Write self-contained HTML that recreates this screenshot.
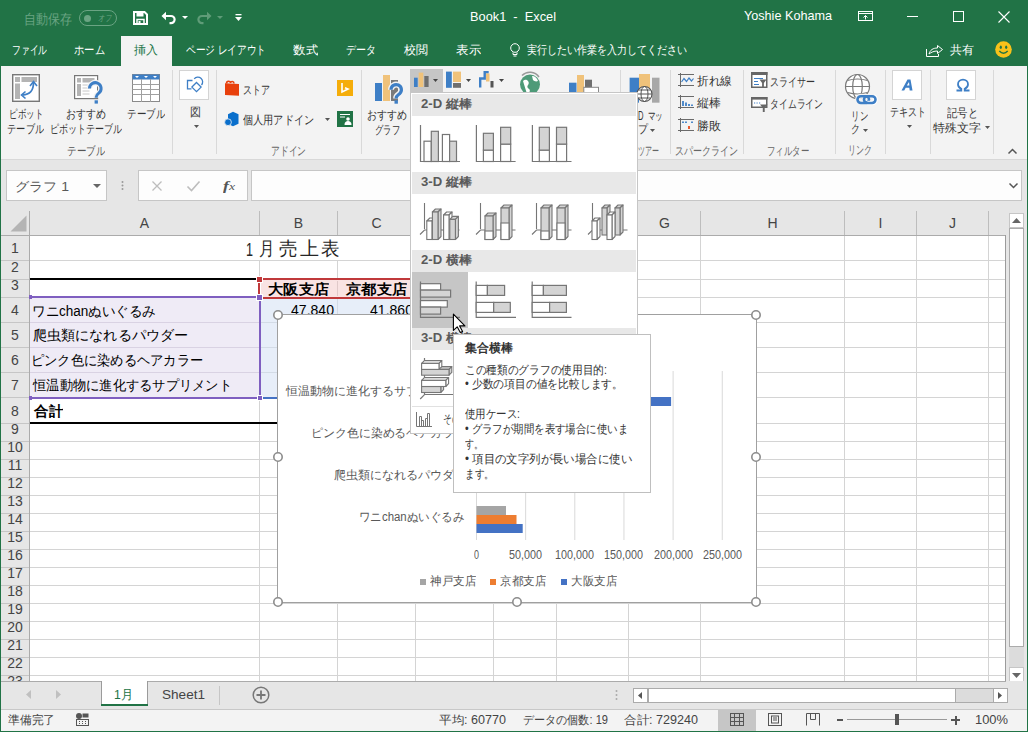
<!DOCTYPE html>
<html><head><meta charset="utf-8">
<style>
*{box-sizing:border-box;margin:0;padding:0}
html,body{width:1028px;height:732px;overflow:hidden;background:#217346;font-family:"Liberation Sans",sans-serif;color:#262626;position:relative}
.a{position:absolute;white-space:nowrap}
.t{transform-origin:0 0}
svg{overflow:visible}
</style></head><body>
<div class="a t" style="transform:scaleX(0.857143);left:24px;top:12px;font-size:14px;line-height:14px;color:#6aa483;--w:48;">自動保存</div>
<div class="a" style="left:79px;top:10px;width:38px;height:16px;border:1px solid #6aa483;border-radius:8px"></div>
<div class="a" style="left:84px;top:15px;width:7px;height:7px;background:#6aa483;border-radius:50%"></div>
<div class="a t" style="transform:scaleX(0.722222);left:98px;top:14px;font-size:9px;line-height:9px;color:#6aa483;--w:13;font-style:italic;">オフ</div>
<svg class="a" style="left:133px;top:11px" width="15" height="14" viewBox="0 0 15 14"><path d="M1 1h10.5l2.5 2.5V13H1z" fill="none" stroke="#fff" stroke-width="2"/><rect x="3.5" y="1" width="7" height="4.5" fill="#fff"/><rect x="4" y="8.5" width="7" height="4.5" fill="none" stroke="#fff" stroke-width="1.5"/><rect x="5.5" y="10" width="2" height="3" fill="#fff"/></svg>
<svg class="a" style="left:161px;top:11px" width="16" height="13" viewBox="0 0 16 13"><path d="M3.5 5h6.5a3.6 3.6 0 0 1 0 7.2h-1.5" fill="none" stroke="#fff" stroke-width="2.2"/><path d="M0.5 5l4.5-4.3v8.6z" fill="#fff"/></svg>
<svg class="a" style="left:182px;top:16px" width="6" height="3" viewBox="0 0 6 3"><path d="M0 0h6l-3 3z" fill="#fff"/></svg>
<svg class="a" style="left:196px;top:11px" width="16" height="13" viewBox="0 0 16 13"><path d="M12.5 5H6a3.6 3.6 0 0 0 0 7.2h1.5" fill="none" stroke="#5f9c78" stroke-width="2.2"/><path d="M15.5 5L11 0.7v8.6z" fill="#5f9c78"/></svg>
<svg class="a" style="left:217px;top:16px" width="6" height="3" viewBox="0 0 6 3"><path d="M0 0h6l-3 3z" fill="#5f9c78"/></svg>
<svg class="a" style="left:235px;top:14px" width="7" height="8" viewBox="0 0 7 8"><rect x="0.5" y="0" width="6" height="1.3" fill="#fff"/><path d="M0 3h7l-3.5 4z" fill="#fff"/></svg>
<div class="a t" style="transform:scaleX(0.98356);left:470px;top:10px;font-size:13px;line-height:13px;color:#fff;--w:86;">Book1&nbsp;&nbsp;-&nbsp;&nbsp;Excel</div>
<div class="a t" style="transform:scaleX(0.971369);left:744px;top:9px;font-size:13px;line-height:13px;color:#fff;--w:88;">Yoshie Kohama</div>
<svg class="a" style="left:858px;top:11px" width="15" height="10" viewBox="0 0 15 10"><rect x="0.5" y="0.5" width="14" height="9" fill="none" stroke="#fff"/><path d="M1 2.5h13" stroke="#fff"/><path d="M7.5 8.5V4.5M5.5 6.5l2-2 2 2" fill="none" stroke="#fff"/></svg>
<div class="a" style="left:907px;top:16px;width:11px;height:1px;background:#fff;"></div>
<div class="a" style="left:953px;top:11px;width:11px;height:11px;border:1px solid #fff"></div>
<svg class="a" style="left:998px;top:11px" width="12" height="12" viewBox="0 0 12 12"><path d="M0.5 0.5l11 11M11.5 0.5l-11 11" stroke="#fff" stroke-width="1.1"/></svg>
<div class="a t" style="transform:scaleX(0.729167);left:12px;top:44px;font-size:12px;line-height:12px;color:#fff;--w:35;">ファイル</div>
<div class="a t" style="transform:scaleX(0.861111);left:74px;top:44px;font-size:12px;line-height:12px;color:#fff;--w:31;">ホーム</div>
<div class="a" style="left:121px;top:36px;width:51px;height:30px;background:#f3f3f3;"></div>
<div class="a t" style="transform:scaleX(1);left:134px;top:44px;font-size:12px;line-height:12px;color:#217346;--w:24;">挿入</div>
<div class="a t" style="transform:scaleX(0.805285);left:186px;top:44px;font-size:12px;line-height:12px;color:#fff;--w:80;">ページ レイアウト</div>
<div class="a t" style="transform:scaleX(1.04167);left:293px;top:44px;font-size:12px;line-height:12px;color:#fff;--w:25;">数式</div>
<div class="a t" style="transform:scaleX(0.833333);left:346px;top:44px;font-size:12px;line-height:12px;color:#fff;--w:30;">データ</div>
<div class="a t" style="transform:scaleX(1);left:404px;top:44px;font-size:12px;line-height:12px;color:#fff;--w:24;">校閲</div>
<div class="a t" style="transform:scaleX(1.04167);left:456px;top:44px;font-size:12px;line-height:12px;color:#fff;--w:25;">表示</div>
<svg class="a" style="left:510px;top:43px" width="10" height="14" viewBox="0 0 10 14"><circle cx="5" cy="5" r="4.3" fill="none" stroke="#fff"/><path d="M3 9.5v2h4v-2M3.5 13h3" fill="none" stroke="#fff"/></svg>
<div class="a t" style="transform:scaleX(0.833333);left:527px;top:44px;font-size:12px;line-height:12px;color:#fff;--w:160;">実行したい作業を入力してください</div>
<svg class="a" style="left:926px;top:44px" width="17" height="13" viewBox="0 0 17 13"><path d="M0.5 5v7.5h12V10" fill="none" stroke="#fff"/><path d="M3 10c1-4 4-6 8.5-6V1.5l5 4-5 4V7C8 7 5.5 8 3 10z" fill="none" stroke="#fff"/></svg>
<div class="a t" style="transform:scaleX(1);left:950px;top:44px;font-size:12px;line-height:12px;color:#fff;--w:24;">共有</div>
<svg class="a" style="left:995px;top:41px" width="17" height="17" viewBox="0 0 17 17"><circle cx="8.5" cy="8.5" r="8.3" fill="#f8c21a"/><ellipse cx="5.8" cy="6.2" rx="1.1" ry="1.7" fill="#217346"/><ellipse cx="11.2" cy="6.2" rx="1.1" ry="1.7" fill="#217346"/><path d="M4.3 10q4.2 4.5 8.4 0" fill="none" stroke="#217346" stroke-width="1.4"/></svg>
<div class="a" style="left:1px;top:66px;width:1026px;height:93px;background:#f3f3f3;"></div>
<div class="a" style="left:1px;top:159px;width:1026px;height:1px;background:#d8d8d8;"></div>
<svg class="a" style="left:12px;top:74px" width="28" height="28" viewBox="0 0 28 28"><rect x="0.7" y="0.7" width="26.6" height="26.6" fill="#fff" stroke="#777" stroke-width="1.4"/><rect x="3" y="3" width="5" height="5" fill="#b4b4b4"/><rect x="9.5" y="3" width="15.5" height="5" fill="#b4b4b4"/><rect x="3" y="9.5" width="5" height="15.5" fill="#b4b4b4"/><path d="M21.5 8.5C21.5 16 19 20.5 10.5 21" fill="none" stroke="#3e7fc6" stroke-width="1.8"/><path d="M18 12l3.5-4.5 3.5 4.5M13.5 17.5l-4 3.5 4 3.5" fill="none" stroke="#3e7fc6" stroke-width="1.6"/></svg>
<div class="a t" style="transform:scaleX(0.708333);left:9px;top:108px;font-size:12px;line-height:12px;color:#333;--w:34;">ピボット</div>
<div class="a t" style="transform:scaleX(0.770833);left:7px;top:123px;font-size:12px;line-height:12px;color:#333;--w:37;">テーブル</div>
<svg class="a" style="left:74px;top:75px" width="28" height="29" viewBox="0 0 28 29"><rect x="0.6" y="0.6" width="23" height="23" fill="#fff" stroke="#777" stroke-width="1.2"/><rect x="3" y="3" width="4" height="4.5" fill="#b4b4b4"/><rect x="8.5" y="3" width="12" height="4.5" fill="#b4b4b4"/><rect x="3" y="9" width="4" height="12" fill="#b4b4b4"/><path d="M8.5 10h7M8.5 13h7M8.5 16h7M8.5 19h7" stroke="#c8c8c8" stroke-width="1"/><path d="M15.5 13.5a5.8 5.8 0 1 1 9.3 4.6c-1.6 1.2-2.6 2-2.6 3.8v0.8" fill="none" stroke="#f3f3f3" stroke-width="5.5"/><path d="M15.5 13.5a5.8 5.8 0 1 1 9.3 4.6c-1.6 1.2-2.6 2-2.6 3.8v0.8" fill="none" stroke="#3e7fc6" stroke-width="3"/><rect x="20.6" y="25.3" width="3.3" height="3.3" fill="#3e7fc6"/></svg>
<div class="a t" style="transform:scaleX(0.833333);left:66px;top:108px;font-size:12px;line-height:12px;color:#333;--w:40;">おすすめ</div>
<div class="a t" style="transform:scaleX(0.75);left:50px;top:123px;font-size:12px;line-height:12px;color:#333;--w:72;">ピボットテーブル</div>
<svg class="a" style="left:132px;top:74px" width="28" height="28" viewBox="0 0 28 28"><rect x="0.5" y="0.5" width="27" height="27" fill="#fff" stroke="#8a8a8a"/><rect x="0.5" y="0.5" width="27" height="5" fill="#3e7fc6"/><path d="M3 2l2 2 2-2zM12 2l2 2 2-2zM21 2l2 2 2-2z" fill="#fff"/><path d="M0.5 10.5h27M0.5 15.5h27M0.5 20.5h27M9.5 5v23M18.5 5v23" stroke="#a0a0a0"/></svg>
<div class="a t" style="transform:scaleX(0.791667);left:127px;top:108px;font-size:12px;line-height:12px;color:#333;--w:38;">テーブル</div>
<div class="a t" style="transform:scaleX(0.791667);left:67px;top:145px;font-size:12px;line-height:12px;color:#555;--w:38;">テーブル</div>
<div class="a" style="left:172px;top:70px;width:1px;height:84px;background:#d9d9d9;"></div>
<div class="a" style="left:179px;top:70px;width:30px;height:30px;background:#fff;border:1px solid #d4d4d4"></div>
<svg class="a" style="left:186px;top:76px" width="20" height="18" viewBox="0 0 20 18"><path d="M6.5 4.5H1.5V12.8H5.5" fill="none" stroke="#3e7fc6" stroke-width="1.3"/><path d="M8.2 2.8A4.6 4.6 0 1 1 15.5 9" fill="none" stroke="#3e7fc6" stroke-width="1.3"/><path d="M10.5 6.5l4.6 4.6-4.6 4.6-4.6-4.6z" fill="none" stroke="#3e7fc6" stroke-width="1.3"/></svg>
<div class="a t" style="transform:scaleX(0.916667);left:190px;top:106px;font-size:12px;line-height:12px;color:#333;--w:11;">図</div>
<svg class="a" style="left:194px;top:125px" width="5" height="3" viewBox="0 0 5 3"><path d="M0 0h5l-2.5 3z" fill="#555"/></svg>
<div class="a" style="left:216px;top:70px;width:1px;height:84px;background:#d9d9d9;"></div>
<svg class="a" style="left:224px;top:79px" width="16" height="18" viewBox="0 0 16 18"><path d="M1 4.3L15 5v11.8L1 16z" fill="#e8400c"/><path d="M2.5 4.5c0-3 4-3 4-.5 0-2 3.5-2 3.5.5" fill="none" stroke="#e8400c" stroke-width="1.6"/></svg>
<div class="a t" style="transform:scaleX(0.75);left:243px;top:84px;font-size:12px;line-height:12px;color:#333;--w:27;">ストア</div>
<svg class="a" style="left:337px;top:80px" width="16" height="16" viewBox="0 0 16 16"><rect width="16" height="16" fill="#f5ad0a"/><path d="M5 3v9l6-3-3-1.2" fill="none" stroke="#fff" stroke-width="1.6"/></svg>
<svg class="a" style="left:224px;top:111px" width="16" height="16" viewBox="0 0 16 16"><path d="M9 0.8l5.5 2.5v9.5L9 15.3 4 13V3.3z" fill="#0a6fcc"/><circle cx="4" cy="11.2" r="3.4" fill="#0a6fcc" stroke="#f3f3f3" stroke-width="0.8"/></svg>
<div class="a t" style="transform:scaleX(0.845238);left:243px;top:114px;font-size:12px;line-height:12px;color:#333;--w:71;">個人用アドイン</div>
<svg class="a" style="left:325px;top:118px" width="5" height="3" viewBox="0 0 5 3"><path d="M0 0h5l-2.5 3z" fill="#555"/></svg>
<svg class="a" style="left:337px;top:111px" width="16" height="16" viewBox="0 0 16 16"><rect width="16" height="16" fill="#217346"/><path d="M3 3.5h10M3 6h5" stroke="#fff"/><circle cx="11" cy="8" r="1.8" fill="#fff"/><path d="M7.5 14c0-3 1.5-4 3.5-4s3.5 1 3.5 4z" fill="#fff"/></svg>
<div class="a t" style="transform:scaleX(0.729167);left:271px;top:145px;font-size:12px;line-height:12px;color:#666;--w:35;">アドイン</div>
<div class="a" style="left:361px;top:70px;width:1px;height:84px;background:#d9d9d9;"></div>
<svg class="a" style="left:374px;top:74px" width="31" height="31" viewBox="0 0 31 31"><rect x="1" y="9" width="7" height="18" fill="#3e7fc6"/><rect x="9" y="1" width="7" height="26" fill="#f0c27a"/><rect x="17" y="6" width="7" height="21" fill="#7a7a7a"/><path d="M17 15.8a5.2 5.2 0 1 1 8.6 3.9c-1.6 1.3-3.4 2-3.4 4.3v0.6" fill="none" stroke="#f3f3f3" stroke-width="6"/><path d="M17 15.8a5.2 5.2 0 1 1 8.6 3.9c-1.6 1.3-3.4 2-3.4 4.3v0.6" fill="none" stroke="#3e7fc6" stroke-width="3.2"/><rect x="20.5" y="26.3" width="3.4" height="3.4" fill="#3e7fc6"/></svg>
<div class="a t" style="transform:scaleX(0.833333);left:367px;top:109px;font-size:12px;line-height:12px;color:#333;--w:40;">おすすめ</div>
<div class="a t" style="transform:scaleX(0.694444);left:375px;top:124px;font-size:12px;line-height:12px;color:#333;--w:25;">グラフ</div>
<div class="a" style="left:410px;top:69px;width:33px;height:24px;background:#c6c6c6;"></div>
<svg class="a" style="left:414px;top:72px" width="15" height="15" viewBox="0 0 15 15"><rect x="0" y="5.7" width="3.7" height="9.3" fill="#3e7fc6"/><rect x="4.7" y="0.6" width="4.6" height="14.4" fill="#f0c27a"/><rect x="10.3" y="4" width="4.3" height="11" fill="#6f6f6f"/></svg>
<svg class="a" style="left:433px;top:79px" width="5" height="3" viewBox="0 0 5 3"><path d="M0 0h5l-2.5 3z" fill="#444"/></svg>
<svg class="a" style="left:446px;top:71px" width="15" height="17" viewBox="0 0 15 17"><rect x="0" y="0.6" width="5.8" height="16.2" fill="#3e7fc6"/><rect x="7" y="0.6" width="8" height="10.4" fill="#f0c27a"/><rect x="7" y="12" width="8" height="4.8" fill="#6f6f6f"/></svg>
<svg class="a" style="left:466px;top:79px" width="5" height="3" viewBox="0 0 5 3"><path d="M0 0h5l-2.5 3z" fill="#444"/></svg>
<svg class="a" style="left:479px;top:71px" width="15" height="17" viewBox="0 0 15 17"><path d="M1.2 16.5V7.5h4.5V1.2h4" fill="none" stroke="#3e7fc6" stroke-width="2.4"/><rect x="7" y="2.5" width="3.5" height="8" fill="#f0c27a"/><rect x="11.5" y="10" width="3" height="6.5" fill="#555"/></svg>
<svg class="a" style="left:499px;top:79px" width="5" height="3" viewBox="0 0 5 3"><path d="M0 0h5l-2.5 3z" fill="#444"/></svg>
<svg class="a" style="left:517px;top:71px" width="26" height="22" viewBox="0 0 26 22"><path d="M5 4.5A11 11 0 0 1 22 6" fill="none" stroke="#999" stroke-width="1.5"/><circle cx="13" cy="13.5" r="10" fill="#4e9a78"/><path d="M6 10c2-2 4-1 5 0s1 3 0 4-1 3 1 4c2 1 0 5-2 5M15 5c3 0 5 2 6 5-2 1-4 0-5-1" fill="#fff"/></svg>
<svg class="a" style="left:569px;top:75px" width="30" height="18" viewBox="0 0 30 18"><rect x="0" y="7.7" width="7.5" height="10.3" fill="#3e7fc6"/><rect x="8" y="0" width="7" height="18" fill="#f0c27a"/><rect x="16" y="4.7" width="7" height="8" fill="#6f6f6f"/><rect x="14.8" y="12.3" width="14.7" height="6" fill="#fff" stroke="#888"/></svg>
<div class="a" style="left:620px;top:70px;width:1px;height:84px;background:#d9d9d9;"></div>
<svg class="a" style="left:629px;top:74px" width="31" height="29" viewBox="0 0 31 29"><rect x="0.6" y="3.7" width="9.4" height="25" fill="#3e7fc6"/><rect x="10" y="0" width="11" height="25" fill="#f0c27a"/><rect x="23" y="3.7" width="7.5" height="25" fill="#a8a8a8"/><circle cx="15.5" cy="20" r="7.5" fill="#fff" stroke="#555" stroke-width="1.1"/><ellipse cx="15.5" cy="20" rx="3.5" ry="7.5" fill="none" stroke="#555" stroke-width="1"/><path d="M8 20h15M9.5 16h12M9.5 24h12" stroke="#555" stroke-width="1"/></svg>
<div class="a t" style="transform:scaleX(0.635425);left:638px;top:110px;font-size:12px;line-height:12px;color:#333;--w:25;">D&nbsp; マッ</div>
<div class="a t" style="transform:scaleX(0.833333);left:638px;top:123px;font-size:12px;line-height:12px;color:#333;--w:10;">プ</div>
<svg class="a" style="left:650px;top:129px" width="5" height="3" viewBox="0 0 5 3"><path d="M0 0h5l-2.5 3z" fill="#555"/></svg>
<div class="a t" style="transform:scaleX(0.583333);left:638px;top:145px;font-size:12px;line-height:12px;color:#666;--w:21;">ツアー</div>
<div class="a" style="left:670px;top:70px;width:1px;height:84px;background:#d9d9d9;"></div>
<svg class="a" style="left:678px;top:73px" width="16" height="14" viewBox="0 0 16 14"><path d="M0 1.5h16M0 12.5h16M2.5 0v14" stroke="#6a6a6a" stroke-width="1"/><path d="M3.5 9l2.5-3.5 2.5 3 2.5-3.5 2.5 3 2-2.5" fill="none" stroke="#3e7fc6" stroke-width="1.2"/></svg>
<div class="a t" style="transform:scaleX(0.972222);left:697px;top:75px;font-size:12px;line-height:12px;color:#333;--w:35;">折れ線</div>
<svg class="a" style="left:678px;top:95px" width="16" height="14" viewBox="0 0 16 14"><path d="M0 1.5h16M0 12.5h16M2.5 0v14" stroke="#6a6a6a" stroke-width="1"/><path d="M5 11V6M8 11V7.5M11 11V9M14 11V9.5" stroke="#3e7fc6" stroke-width="1.8"/></svg>
<div class="a t" style="transform:scaleX(1);left:697px;top:97px;font-size:12px;line-height:12px;color:#333;--w:24;">縦棒</div>
<svg class="a" style="left:678px;top:118px" width="16" height="14" viewBox="0 0 16 14"><path d="M0 1.5h16M0 12.5h16M2.5 0v14" stroke="#6a6a6a" stroke-width="1"/><path d="M5 5V3.5M8 5V3.5M14 5V3.5" stroke="#3e7fc6" stroke-width="1.8"/><path d="M11 8v3" stroke="#e84b1c" stroke-width="1.8"/></svg>
<div class="a t" style="transform:scaleX(1);left:697px;top:120px;font-size:12px;line-height:12px;color:#333;--w:24;">勝敗</div>
<div class="a t" style="transform:scaleX(0.75);left:675px;top:145px;font-size:12px;line-height:12px;color:#666;--w:63;">スパークライン</div>
<div class="a" style="left:743px;top:70px;width:1px;height:84px;background:#d9d9d9;"></div>
<svg class="a" style="left:751px;top:72px" width="17" height="16" viewBox="0 0 17 16"><rect x="0.75" y="0.75" width="15" height="14.5" fill="#fff" stroke="#666" stroke-width="1.5"/><rect x="0" y="0" width="16.5" height="3" fill="#666"/><path d="M3 6.5h9M3 9.5h4M3 12.5h5" stroke="#3e7fc6" stroke-width="1.2"/><path d="M8.5 7.5h7l-2.6 3.5V15h-1.8v-4z" fill="#666"/></svg>
<div class="a t" style="transform:scaleX(0.75);left:770px;top:76px;font-size:12px;line-height:12px;color:#333;--w:45;">スライサー</div>
<svg class="a" style="left:751px;top:97px" width="17" height="15" viewBox="0 0 17 15"><rect x="0.75" y="0.75" width="15" height="9.5" fill="#fff" stroke="#666" stroke-width="1.5"/><rect x="0" y="0" width="16.5" height="2.6" fill="#666"/><path d="M3 6h1.2M5.5 6h1.2M8 6h1.2" stroke="#3e7fc6" stroke-width="1.2"/><path d="M9 7.5h7.5l-2.8 3.5V15h-1.9v-4z" fill="#666"/></svg>
<div class="a t" style="transform:scaleX(0.736111);left:770px;top:98px;font-size:12px;line-height:12px;color:#333;--w:53;">タイムライン</div>
<div class="a t" style="transform:scaleX(0.7);left:767px;top:145px;font-size:12px;line-height:12px;color:#666;--w:42;">フィルター</div>
<div class="a" style="left:835px;top:70px;width:1px;height:84px;background:#d9d9d9;"></div>
<svg class="a" style="left:838px;top:68px" width="46" height="40" viewBox="0 0 46 40"><circle cx="19.5" cy="18.5" r="12" fill="#fff" stroke="#7a7a7a" stroke-width="1.2"/><ellipse cx="19.5" cy="18.5" rx="4.8" ry="12" fill="none" stroke="#7a7a7a" stroke-width="1.2"/><path d="M7.5 18.5h24M9.5 12.5q10-3 20 0M9.5 24.5q10 3 20 0" fill="none" stroke="#7a7a7a" stroke-width="1.2"/><path d="M22.9 28.2h4.7a3.4 3.4 0 0 1 0 6.8h-4.7a3.4 3.4 0 0 1 0 -6.8z" fill="none" stroke="#f3f3f3" stroke-width="5"/><path d="M22.9 28.2h4.7a3.4 3.4 0 0 1 0 6.8h-4.7a3.4 3.4 0 0 1 0 -6.8z" fill="none" stroke="#3e7fc6" stroke-width="2.6"/><path d="M29.4 28.2h4.7a3.4 3.4 0 0 1 0 6.8h-4.7a3.4 3.4 0 0 1 0 -6.8z" fill="none" stroke="#fff" stroke-width="4.6" stroke-dasharray="14 40" stroke-dashoffset="-6"/><path d="M29.4 28.2h4.7a3.4 3.4 0 0 1 0 6.8h-4.7a3.4 3.4 0 0 1 0 -6.8z" fill="none" stroke="#3e7fc6" stroke-width="2.6"/></svg>
<div class="a t" style="transform:scaleX(0.708333);left:851px;top:110px;font-size:12px;line-height:12px;color:#333;--w:17;">リン</div>
<div class="a t" style="transform:scaleX(0.75);left:851px;top:123px;font-size:12px;line-height:12px;color:#333;--w:9;">ク</div>
<svg class="a" style="left:863px;top:129px" width="5" height="3" viewBox="0 0 5 3"><path d="M0 0h5l-2.5 3z" fill="#555"/></svg>
<div class="a t" style="transform:scaleX(0.666667);left:848px;top:144px;font-size:12px;line-height:12px;color:#666;--w:24;">リンク</div>
<div class="a" style="left:885px;top:70px;width:1px;height:84px;background:#d9d9d9;"></div>
<div class="a" style="left:892px;top:70px;width:30px;height:30px;background:#fff;border:1px solid #d4d4d4"></div>
<svg class="a" style="left:901px;top:79px" width="12" height="12" viewBox="0 0 12 12"><path d="M0.5 11.5L6.5 0.5h3l2 11h-2.8l-.4-2.8H4.7l-1.5 2.8z M5.8 6.5h2.6L8 3z" fill="#3e7fc6" fill-rule="evenodd"/></svg>
<div class="a t" style="transform:scaleX(0.75);left:890px;top:106px;font-size:12px;line-height:12px;color:#333;--w:36;">テキスト</div>
<svg class="a" style="left:907px;top:125px" width="5" height="3" viewBox="0 0 5 3"><path d="M0 0h5l-2.5 3z" fill="#555"/></svg>
<div class="a" style="left:930px;top:70px;width:1px;height:84px;background:#d9d9d9;"></div>
<div class="a" style="left:946px;top:70px;width:30px;height:30px;background:#fff;border:1px solid #d4d4d4"></div>
<svg class="a" style="left:955.5px;top:79px" width="14" height="12" viewBox="0 0 14 12"><path d="M1 12h4.3v-2C2.8 9 1.5 7 1.5 5 1.5 2 4 0 7 0s5.5 2 5.5 5c0 2-1.3 4-3.8 5v2H13v-1.8h-2.5v.2c2-1 3.3-3 3.3-5.4" fill="none"/><path d="M0.5 11.5h4.8V9.8C3 8.8 2 7 2 5.2 2 2.5 4.2 0.6 7 0.6s5 1.9 5 4.6c0 1.8-1 3.6-3.3 4.6v1.7h4.8" fill="none" stroke="#3e7fc6" stroke-width="1.8"/></svg>
<div class="a t" style="transform:scaleX(0.861111);left:947px;top:107px;font-size:12px;line-height:12px;color:#333;--w:31;">記号と</div>
<div class="a t" style="transform:scaleX(1);left:933px;top:122px;font-size:12px;line-height:12px;color:#333;--w:48;">特殊文字</div>
<svg class="a" style="left:985px;top:126px" width="5" height="3" viewBox="0 0 5 3"><path d="M0 0h5l-2.5 3z" fill="#555"/></svg>
<div class="a" style="left:993px;top:70px;width:1px;height:84px;background:#d9d9d9;"></div>
<svg class="a" style="left:1008px;top:149px" width="9" height="5" viewBox="0 0 9 5"><path d="M0.5 4.5l4-4 4 4" fill="none" stroke="#555" stroke-width="1.5"/></svg>
<div class="a" style="left:1px;top:160px;width:1026px;height:51px;background:#e6e6e6;"></div>
<div class="a" style="left:6px;top:170px;width:101px;height:31px;background:#fdfdfd;border:1px solid #c6c6c6"></div>
<div class="a t" style="transform:scaleX(1.08339);left:15px;top:180px;font-size:13px;line-height:13px;color:#595959;--w:54;">グラフ 1</div>
<svg class="a" style="left:93px;top:184px" width="8" height="4" viewBox="0 0 8 4"><path d="M0 0h8l-4 4z" fill="#666"/></svg>
<svg class="a" style="left:121px;top:181px" width="3" height="10" viewBox="0 0 3 10"><circle cx="1.5" cy="1" r="1" fill="#999"/><circle cx="1.5" cy="4.5" r="1" fill="#999"/><circle cx="1.5" cy="8" r="1" fill="#999"/></svg>
<div class="a" style="left:138px;top:170px;width:110px;height:31px;background:#fdfdfd;border:1px solid #c6c6c6"></div>
<svg class="a" style="left:152px;top:181px" width="10" height="10" viewBox="0 0 10 10"><path d="M0.5 0.5l9 9M9.5 0.5l-9 9" stroke="#bdbdbd" stroke-width="1.3"/></svg>
<svg class="a" style="left:187px;top:181px" width="13" height="10" viewBox="0 0 13 10"><path d="M0.5 5.5l4 4 8-9" fill="none" stroke="#bdbdbd" stroke-width="1.6"/></svg>
<div class="a t" style="transform:scaleX(1.36412);left:223px;top:179px;font-size:13px;line-height:13px;color:#555;--w:12;"><i style="font-family:Liberation Serif;font-weight:bold">f</i><i style="font-family:Liberation Serif;font-size:10px">x</i></div>
<div class="a" style="left:251px;top:170px;width:771px;height:31px;background:#fdfdfd;border:1px solid #c6c6c6"></div>
<svg class="a" style="left:1009px;top:183px" width="9" height="5" viewBox="0 0 9 5"><path d="M0.5 0.5l4 4 4-4" fill="none" stroke="#555" stroke-width="1.5"/></svg>
<div class="a" style="left:1px;top:211px;width:1026px;height:470px;background:#e6e6e6;"></div>
<div class="a" style="left:30px;top:236px;width:976px;height:445px;background:#fff;"></div>
<svg class="a" style="left:10px;top:215px" width="17" height="17" viewBox="0 0 17 17"><path d="M16.5 0.5V16.5H0.5z" fill="#b4b4b4"/></svg>
<div class="a" style="left:29px;top:211px;width:1px;height:470px;background:#ababab;"></div>
<div class="a" style="left:1px;top:235px;width:1005px;height:1px;background:#ababab;"></div>
<div class="a" style="left:259px;top:211px;width:1px;height:24px;background:#bdbdbd;"></div>
<div class="a" style="left:259px;top:261px;width:1px;height:420px;background:#d4d4d4;"></div>
<div class="a" style="left:337px;top:211px;width:1px;height:24px;background:#bdbdbd;"></div>
<div class="a" style="left:337px;top:261px;width:1px;height:420px;background:#d4d4d4;"></div>
<div class="a" style="left:415px;top:211px;width:1px;height:24px;background:#bdbdbd;"></div>
<div class="a" style="left:415px;top:236px;width:1px;height:445px;background:#d4d4d4;"></div>
<div class="a" style="left:493px;top:211px;width:1px;height:24px;background:#bdbdbd;"></div>
<div class="a" style="left:493px;top:236px;width:1px;height:445px;background:#d4d4d4;"></div>
<div class="a" style="left:556px;top:211px;width:1px;height:24px;background:#bdbdbd;"></div>
<div class="a" style="left:556px;top:236px;width:1px;height:445px;background:#d4d4d4;"></div>
<div class="a" style="left:628px;top:211px;width:1px;height:24px;background:#bdbdbd;"></div>
<div class="a" style="left:628px;top:236px;width:1px;height:445px;background:#d4d4d4;"></div>
<div class="a" style="left:700px;top:211px;width:1px;height:24px;background:#bdbdbd;"></div>
<div class="a" style="left:700px;top:236px;width:1px;height:445px;background:#d4d4d4;"></div>
<div class="a" style="left:844px;top:211px;width:1px;height:24px;background:#bdbdbd;"></div>
<div class="a" style="left:844px;top:236px;width:1px;height:445px;background:#d4d4d4;"></div>
<div class="a" style="left:916px;top:211px;width:1px;height:24px;background:#bdbdbd;"></div>
<div class="a" style="left:916px;top:236px;width:1px;height:445px;background:#d4d4d4;"></div>
<div class="a" style="left:988px;top:211px;width:1px;height:24px;background:#bdbdbd;"></div>
<div class="a" style="left:988px;top:236px;width:1px;height:445px;background:#d4d4d4;"></div>
<div class="a" style="left:124.5px;top:215px;width:40px;text-align:center;font-size:14px;line-height:16px;color:#444">A</div>
<div class="a" style="left:278.5px;top:215px;width:40px;text-align:center;font-size:14px;line-height:16px;color:#444">B</div>
<div class="a" style="left:356.5px;top:215px;width:40px;text-align:center;font-size:14px;line-height:16px;color:#444">C</div>
<div class="a" style="left:434.5px;top:215px;width:40px;text-align:center;font-size:14px;line-height:16px;color:#444">D</div>
<div class="a" style="left:505.0px;top:215px;width:40px;text-align:center;font-size:14px;line-height:16px;color:#444">E</div>
<div class="a" style="left:572.5px;top:215px;width:40px;text-align:center;font-size:14px;line-height:16px;color:#444">F</div>
<div class="a" style="left:644.5px;top:215px;width:40px;text-align:center;font-size:14px;line-height:16px;color:#444">G</div>
<div class="a" style="left:752.5px;top:215px;width:40px;text-align:center;font-size:14px;line-height:16px;color:#444">H</div>
<div class="a" style="left:860.5px;top:215px;width:40px;text-align:center;font-size:14px;line-height:16px;color:#444">I</div>
<div class="a" style="left:932.5px;top:215px;width:40px;text-align:center;font-size:14px;line-height:16px;color:#444">J</div>
<div class="a" style="left:1005px;top:235px;width:1px;height:446px;background:#9b9b9b;"></div>
<div class="a" style="left:0px;top:260px;width:29px;height:1px;background:#c6c6c6;"></div>
<div class="a" style="left:30px;top:260px;width:975px;height:1px;background:#d4d4d4;"></div>
<div class="a" style="left:1px;top:240px;width:28px;text-align:center;font-size:14px;line-height:16px;color:#444">1</div>
<div class="a" style="left:0px;top:279px;width:29px;height:1px;background:#c6c6c6;"></div>
<div class="a" style="left:30px;top:279px;width:975px;height:1px;background:#d4d4d4;"></div>
<div class="a" style="left:1px;top:259px;width:28px;text-align:center;font-size:14px;line-height:16px;color:#444">2</div>
<div class="a" style="left:0px;top:297px;width:29px;height:1px;background:#c6c6c6;"></div>
<div class="a" style="left:30px;top:297px;width:975px;height:1px;background:#d4d4d4;"></div>
<div class="a" style="left:1px;top:277px;width:28px;text-align:center;font-size:14px;line-height:16px;color:#444">3</div>
<div class="a" style="left:0px;top:322px;width:29px;height:1px;background:#c6c6c6;"></div>
<div class="a" style="left:30px;top:322px;width:975px;height:1px;background:#d4d4d4;"></div>
<div class="a" style="left:1px;top:302px;width:28px;text-align:center;font-size:14px;line-height:16px;color:#444">4</div>
<div class="a" style="left:0px;top:347px;width:29px;height:1px;background:#c6c6c6;"></div>
<div class="a" style="left:30px;top:347px;width:975px;height:1px;background:#d4d4d4;"></div>
<div class="a" style="left:1px;top:327px;width:28px;text-align:center;font-size:14px;line-height:16px;color:#444">5</div>
<div class="a" style="left:0px;top:372px;width:29px;height:1px;background:#c6c6c6;"></div>
<div class="a" style="left:30px;top:372px;width:975px;height:1px;background:#d4d4d4;"></div>
<div class="a" style="left:1px;top:352px;width:28px;text-align:center;font-size:14px;line-height:16px;color:#444">6</div>
<div class="a" style="left:0px;top:397px;width:29px;height:1px;background:#c6c6c6;"></div>
<div class="a" style="left:30px;top:397px;width:975px;height:1px;background:#d4d4d4;"></div>
<div class="a" style="left:1px;top:377px;width:28px;text-align:center;font-size:14px;line-height:16px;color:#444">7</div>
<div class="a" style="left:0px;top:423px;width:29px;height:1px;background:#c6c6c6;"></div>
<div class="a" style="left:30px;top:423px;width:975px;height:1px;background:#d4d4d4;"></div>
<div class="a" style="left:1px;top:403px;width:28px;text-align:center;font-size:14px;line-height:16px;color:#444">8</div>
<div class="a" style="left:0px;top:441px;width:29px;height:1px;background:#c6c6c6;"></div>
<div class="a" style="left:30px;top:441px;width:975px;height:1px;background:#d4d4d4;"></div>
<div class="a" style="left:1px;top:421px;width:28px;text-align:center;font-size:14px;line-height:16px;color:#444">9</div>
<div class="a" style="left:0px;top:459px;width:29px;height:1px;background:#c6c6c6;"></div>
<div class="a" style="left:30px;top:459px;width:975px;height:1px;background:#d4d4d4;"></div>
<div class="a" style="left:1px;top:439px;width:28px;text-align:center;font-size:14px;line-height:16px;color:#444">10</div>
<div class="a" style="left:0px;top:477px;width:29px;height:1px;background:#c6c6c6;"></div>
<div class="a" style="left:30px;top:477px;width:975px;height:1px;background:#d4d4d4;"></div>
<div class="a" style="left:1px;top:457px;width:28px;text-align:center;font-size:14px;line-height:16px;color:#444">11</div>
<div class="a" style="left:0px;top:495px;width:29px;height:1px;background:#c6c6c6;"></div>
<div class="a" style="left:30px;top:495px;width:975px;height:1px;background:#d4d4d4;"></div>
<div class="a" style="left:1px;top:475px;width:28px;text-align:center;font-size:14px;line-height:16px;color:#444">12</div>
<div class="a" style="left:0px;top:513px;width:29px;height:1px;background:#c6c6c6;"></div>
<div class="a" style="left:30px;top:513px;width:975px;height:1px;background:#d4d4d4;"></div>
<div class="a" style="left:1px;top:493px;width:28px;text-align:center;font-size:14px;line-height:16px;color:#444">13</div>
<div class="a" style="left:0px;top:531px;width:29px;height:1px;background:#c6c6c6;"></div>
<div class="a" style="left:30px;top:531px;width:975px;height:1px;background:#d4d4d4;"></div>
<div class="a" style="left:1px;top:511px;width:28px;text-align:center;font-size:14px;line-height:16px;color:#444">14</div>
<div class="a" style="left:0px;top:549px;width:29px;height:1px;background:#c6c6c6;"></div>
<div class="a" style="left:30px;top:549px;width:975px;height:1px;background:#d4d4d4;"></div>
<div class="a" style="left:1px;top:529px;width:28px;text-align:center;font-size:14px;line-height:16px;color:#444">15</div>
<div class="a" style="left:0px;top:567px;width:29px;height:1px;background:#c6c6c6;"></div>
<div class="a" style="left:30px;top:567px;width:975px;height:1px;background:#d4d4d4;"></div>
<div class="a" style="left:1px;top:547px;width:28px;text-align:center;font-size:14px;line-height:16px;color:#444">16</div>
<div class="a" style="left:0px;top:585px;width:29px;height:1px;background:#c6c6c6;"></div>
<div class="a" style="left:30px;top:585px;width:975px;height:1px;background:#d4d4d4;"></div>
<div class="a" style="left:1px;top:565px;width:28px;text-align:center;font-size:14px;line-height:16px;color:#444">17</div>
<div class="a" style="left:0px;top:603px;width:29px;height:1px;background:#c6c6c6;"></div>
<div class="a" style="left:30px;top:603px;width:975px;height:1px;background:#d4d4d4;"></div>
<div class="a" style="left:1px;top:583px;width:28px;text-align:center;font-size:14px;line-height:16px;color:#444">18</div>
<div class="a" style="left:0px;top:621px;width:29px;height:1px;background:#c6c6c6;"></div>
<div class="a" style="left:30px;top:621px;width:975px;height:1px;background:#d4d4d4;"></div>
<div class="a" style="left:1px;top:601px;width:28px;text-align:center;font-size:14px;line-height:16px;color:#444">19</div>
<div class="a" style="left:0px;top:639px;width:29px;height:1px;background:#c6c6c6;"></div>
<div class="a" style="left:30px;top:639px;width:975px;height:1px;background:#d4d4d4;"></div>
<div class="a" style="left:1px;top:619px;width:28px;text-align:center;font-size:14px;line-height:16px;color:#444">20</div>
<div class="a" style="left:0px;top:657px;width:29px;height:1px;background:#c6c6c6;"></div>
<div class="a" style="left:30px;top:657px;width:975px;height:1px;background:#d4d4d4;"></div>
<div class="a" style="left:1px;top:637px;width:28px;text-align:center;font-size:14px;line-height:16px;color:#444">21</div>
<div class="a" style="left:0px;top:675px;width:29px;height:1px;background:#c6c6c6;"></div>
<div class="a" style="left:30px;top:675px;width:975px;height:1px;background:#d4d4d4;"></div>
<div class="a" style="left:1px;top:655px;width:28px;text-align:center;font-size:14px;line-height:16px;color:#444">22</div>
<div class="a" style="left:1px;top:673px;width:28px;text-align:center;font-size:14px;line-height:16px;color:#444">23</div>
<div class="a t" style="transform:scaleX(0.661743);left:246px;top:240px;font-size:19px;line-height:19px;color:#262626;--w:7;">1</div>
<div class="a t" style="transform:scaleX(0.815789);left:259px;top:239px;font-size:19px;line-height:19px;color:#262626;--w:15.5;">月</div>
<div class="a t" style="transform:scaleX(0.973684);left:279px;top:239px;font-size:19px;line-height:19px;color:#262626;--w:18.5;">売</div>
<div class="a t" style="transform:scaleX(1);left:300px;top:239px;font-size:19px;line-height:19px;color:#262626;--w:19;">上</div>
<div class="a t" style="transform:scaleX(0.973684);left:321px;top:239px;font-size:19px;line-height:19px;color:#262626;--w:18.5;">表</div>
<div class="a" style="left:30px;top:278px;width:229px;height:2px;background:#000;"></div>
<div class="a" style="left:261px;top:280px;width:232px;height:17px;background:#f9e3e3;"></div>
<div class="a" style="left:337px;top:281px;width:1px;height:15px;background:#e0c9c9;"></div>
<div class="a t" style="transform:scaleX(1.08929);left:268px;top:282px;font-size:14px;line-height:14px;color:#000;font-weight:bold;--w:61;">大阪支店</div>
<div class="a t" style="transform:scaleX(1.08929);left:346px;top:282px;font-size:14px;line-height:14px;color:#000;font-weight:bold;--w:61;">京都支店</div>
<div class="a" style="left:258px;top:278px;width:236px;height:2px;background:#c0393b;"></div>
<div class="a" style="left:258px;top:278px;width:2px;height:20px;background:#c0393b;"></div>
<div class="a" style="left:259px;top:297px;width:235px;height:2px;background:#c0393b;"></div>
<div class="a" style="left:256px;top:276px;width:7px;height:7px;background:#c0393b;border:1px solid #fff"></div>
<div class="a" style="left:30px;top:298px;width:229px;height:99px;background:#efebf6;"></div>
<div class="a" style="left:30px;top:322px;width:229px;height:1px;background:#d9d2e3;"></div>
<div class="a" style="left:30px;top:347px;width:229px;height:1px;background:#d9d2e3;"></div>
<div class="a" style="left:30px;top:372px;width:229px;height:1px;background:#d9d2e3;"></div>
<div class="a" style="left:261px;top:299px;width:154px;height:98px;background:#e7eef9;"></div>
<div class="a" style="left:260px;top:322px;width:155px;height:1px;background:#d3dbe6;"></div>
<div class="a" style="left:260px;top:347px;width:155px;height:1px;background:#d3dbe6;"></div>
<div class="a" style="left:260px;top:372px;width:155px;height:1px;background:#d3dbe6;"></div>
<div class="a" style="left:337px;top:299px;width:1px;height:98px;background:#d3dbe6;"></div>
<div class="a" style="left:259px;top:397px;width:156px;height:2px;background:#4472c4;"></div>
<div class="a t" style="transform:scaleX(0.937011);left:291px;top:302px;font-size:15px;line-height:15px;color:#000;--w:43;">47,840</div>
<div class="a t" style="transform:scaleX(0.937011);left:370px;top:302px;font-size:15px;line-height:15px;color:#000;--w:43;">41,860</div>
<div class="a" style="left:30px;top:296px;width:231px;height:2px;background:#7f5fc0;"></div>
<div class="a" style="left:259px;top:297px;width:2px;height:102px;background:#7f5fc0;"></div>
<div class="a" style="left:30px;top:397px;width:231px;height:2px;background:#7f5fc0;"></div>
<div class="a" style="left:256px;top:294px;width:7px;height:7px;background:#7f5fc0;border:1px solid #fff"></div>
<div class="a" style="left:257px;top:395px;width:6px;height:6px;background:#7f5fc0;border:1px solid #fff"></div>
<div class="a" style="left:29px;top:295px;width:3px;height:4px;background:#7f5fc0;"></div>
<div class="a" style="left:29px;top:396px;width:3px;height:4px;background:#7f5fc0;"></div>
<div class="a t" style="transform:scaleX(0.966038);left:32px;top:304px;font-size:14px;line-height:14px;color:#000;--w:124;">ワニchanぬいぐるみ</div>
<div class="a t" style="transform:scaleX(1.00649);left:33px;top:328px;font-size:14px;line-height:14px;color:#000;--w:155;">爬虫類になれるパウダー</div>
<div class="a t" style="transform:scaleX(0.945055);left:31px;top:353px;font-size:14px;line-height:14px;color:#000;--w:172;">ピンク色に染めるヘアカラー</div>
<div class="a t" style="transform:scaleX(0.947619);left:33px;top:378px;font-size:14px;line-height:14px;color:#000;--w:199;">恒温動物に進化するサプリメント</div>
<div class="a t" style="transform:scaleX(1.03571);left:34px;top:404px;font-size:14px;line-height:14px;color:#000;font-weight:bold;--w:29;">合計</div>
<div class="a" style="left:30px;top:422px;width:420px;height:2px;background:#000;"></div>
<div class="a" style="left:1006px;top:211px;width:21px;height:470px;background:#e6e6e6;"></div>
<div class="a" style="left:1009px;top:213px;width:15px;height:15px;background:#fff;border:1px solid #c6c6c6"></div>
<svg class="a" style="left:1012px;top:218px" width="9" height="5" viewBox="0 0 9 5"><path d="M0 5h9L4.5 0z" fill="#666"/></svg>
<div class="a" style="left:1009px;top:228px;width:15px;height:419px;background:#fff;border:1px solid #ababab"></div>
<div class="a" style="left:1009px;top:647px;width:15px;height:20px;background:#dcdcdc;"></div>
<div class="a" style="left:1009px;top:667px;width:15px;height:15px;background:#fff;border:1px solid #c6c6c6"></div>
<svg class="a" style="left:1012px;top:673px" width="9" height="5" viewBox="0 0 9 5"><path d="M0 0h9L4.5 5z" fill="#666"/></svg>
<div class="a" style="left:277px;top:314px;width:480px;height:289px;background:#fff;border:1px solid #a0a0a0"></div>
<svg class="a" style="left:0;top:0" width="1028" height="732"><path d="M476.5 371V540" stroke="#d9d9d9" stroke-width="1"/><path d="M525.65 371V540" stroke="#d9d9d9" stroke-width="1"/><path d="M574.8 371V540" stroke="#d9d9d9" stroke-width="1"/><path d="M623.95 371V540" stroke="#d9d9d9" stroke-width="1"/><path d="M673.1 371V540" stroke="#d9d9d9" stroke-width="1"/><path d="M722.25 371V540" stroke="#d9d9d9" stroke-width="1"/><rect x="476.5" y="506" width="29.5" height="9" fill="#a5a5a5"/><rect x="476.5" y="515" width="40.0" height="9" fill="#ed7d31"/><rect x="476.5" y="524" width="46.2" height="9" fill="#4472c4"/><rect x="476.5" y="397" width="194.6" height="9" fill="#4472c4"/></svg>
<div class="a t" style="transform:scaleX(1);left:286px;top:385px;font-size:12px;line-height:12px;color:#595959;--w:180;">恒温動物に進化するサプリメント</div>
<div class="a t" style="transform:scaleX(0.99359);left:311px;top:427px;font-size:12px;line-height:12px;color:#595959;--w:155;">ピンク色に染めるヘアカラー</div>
<div class="a t" style="transform:scaleX(1);left:334px;top:469px;font-size:12px;line-height:12px;color:#595959;--w:132;">爬虫類になれるパウダー</div>
<div class="a t" style="transform:scaleX(0.954274);left:359px;top:511px;font-size:12px;line-height:12px;color:#595959;--w:105;">ワニchanぬいぐるみ</div>
<div class="a t" style="transform:scaleX(0.747664);left:474.0px;top:549px;font-size:12px;line-height:12px;color:#595959;--w:5;">0</div>
<div class="a t" style="transform:scaleX(0.899106);left:509.15px;top:549px;font-size:12px;line-height:12px;color:#595959;--w:33;">50,000</div>
<div class="a t" style="transform:scaleX(0.898812);left:555.3px;top:549px;font-size:12px;line-height:12px;color:#595959;--w:39;">100,000</div>
<div class="a t" style="transform:scaleX(0.898812);left:604.45px;top:549px;font-size:12px;line-height:12px;color:#595959;--w:39;">150,000</div>
<div class="a t" style="transform:scaleX(0.898812);left:653.6px;top:549px;font-size:12px;line-height:12px;color:#595959;--w:39;">200,000</div>
<div class="a t" style="transform:scaleX(0.898812);left:702.75px;top:549px;font-size:12px;line-height:12px;color:#595959;--w:39;">250,000</div>
<div class="a" style="left:420px;top:579px;width:6px;height:6px;background:#a5a5a5;"></div>
<div class="a t" style="transform:scaleX(0.958333);left:430px;top:575px;font-size:12px;line-height:12px;color:#595959;--w:46;">神戸支店</div>
<div class="a" style="left:490px;top:579px;width:6px;height:6px;background:#ed7d31;"></div>
<div class="a t" style="transform:scaleX(0.958333);left:500px;top:575px;font-size:12px;line-height:12px;color:#595959;--w:46;">京都支店</div>
<div class="a" style="left:561px;top:579px;width:6px;height:6px;background:#4472c4;"></div>
<div class="a t" style="transform:scaleX(0.958333);left:571px;top:575px;font-size:12px;line-height:12px;color:#595959;--w:46;">大阪支店</div>
<svg class="a" style="left:272.5px;top:309.5px" width="10" height="10" viewBox="0 0 10 10"><circle cx="5" cy="5" r="4.2" fill="#fff" stroke="#8c8c8c" stroke-width="1.6"/></svg>
<svg class="a" style="left:751px;top:309.5px" width="10" height="10" viewBox="0 0 10 10"><circle cx="5" cy="5" r="4.2" fill="#fff" stroke="#8c8c8c" stroke-width="1.6"/></svg>
<svg class="a" style="left:272.5px;top:452px" width="10" height="10" viewBox="0 0 10 10"><circle cx="5" cy="5" r="4.2" fill="#fff" stroke="#8c8c8c" stroke-width="1.6"/></svg>
<svg class="a" style="left:751px;top:452px" width="10" height="10" viewBox="0 0 10 10"><circle cx="5" cy="5" r="4.2" fill="#fff" stroke="#8c8c8c" stroke-width="1.6"/></svg>
<svg class="a" style="left:272.5px;top:596.5px" width="10" height="10" viewBox="0 0 10 10"><circle cx="5" cy="5" r="4.2" fill="#fff" stroke="#8c8c8c" stroke-width="1.6"/></svg>
<svg class="a" style="left:511.5px;top:596.5px" width="10" height="10" viewBox="0 0 10 10"><circle cx="5" cy="5" r="4.2" fill="#fff" stroke="#8c8c8c" stroke-width="1.6"/></svg>
<svg class="a" style="left:751px;top:596.5px" width="10" height="10" viewBox="0 0 10 10"><circle cx="5" cy="5" r="4.2" fill="#fff" stroke="#8c8c8c" stroke-width="1.6"/></svg>
<div class="a" style="left:410px;top:92px;width:228px;height:342px;background:#fff;border:1px solid #c6c6c6"></div>
<div class="a" style="left:412px;top:94px;width:224px;height:22px;background:#e8e8e8;"></div>
<div class="a t" style="transform:scaleX(1.09274);left:421px;top:98px;font-size:12px;line-height:12px;color:#5a5a5a;font-weight:bold;--w:51;">2-D 縦棒</div>
<div class="a" style="left:412px;top:172px;width:224px;height:22px;background:#e8e8e8;"></div>
<div class="a t" style="transform:scaleX(1.09274);left:421px;top:176px;font-size:12px;line-height:12px;color:#5a5a5a;font-weight:bold;--w:51;">3-D 縦棒</div>
<div class="a" style="left:412px;top:250px;width:224px;height:22px;background:#e8e8e8;"></div>
<div class="a t" style="transform:scaleX(1.09274);left:421px;top:254px;font-size:12px;line-height:12px;color:#5a5a5a;font-weight:bold;--w:51;">2-D 横棒</div>
<div class="a" style="left:412px;top:328px;width:224px;height:22px;background:#e8e8e8;"></div>
<div class="a t" style="transform:scaleX(1.09274);left:421px;top:332px;font-size:12px;line-height:12px;color:#5a5a5a;font-weight:bold;--w:51;">3-D 横棒</div>
<div class="a" style="left:412px;top:272px;width:56px;height:56px;background:#c6c6c6;"></div>
<svg class="a" style="left:0;top:0" width="1028" height="732"><path d="M420.5 125V161.5H460" fill="none" stroke="#767676" stroke-width="1.2"/><rect x="424" y="141.2" width="7.300000000000011" height="20.30000000000001" fill="#fff" stroke="#767676" stroke-width="1.2"/><rect x="431.3" y="131.3" width="7.099999999999966" height="30.19999999999999" fill="#d4d4d4" stroke="#767676" stroke-width="1.2"/><rect x="442.4" y="134.5" width="7.2000000000000455" height="27.0" fill="#fff" stroke="#767676" stroke-width="1.2"/><rect x="449.6" y="141.2" width="6.899999999999977" height="20.30000000000001" fill="#d4d4d4" stroke="#767676" stroke-width="1.2"/><path d="M476.4 125V161.5H515.6" fill="none" stroke="#767676" stroke-width="1.2"/><rect x="483.4" y="150.1" width="10.0" height="11.400000000000006" fill="#fff" stroke="#767676" stroke-width="1.2"/><rect x="483.4" y="133.3" width="10.0" height="16.799999999999983" fill="#d4d4d4" stroke="#767676" stroke-width="1.2"/><rect x="500.6" y="144.1" width="10.099999999999966" height="17.400000000000006" fill="#fff" stroke="#767676" stroke-width="1.2"/><rect x="500.6" y="127.3" width="10.099999999999966" height="16.799999999999997" fill="#d4d4d4" stroke="#767676" stroke-width="1.2"/><path d="M532.4 125V161.5H571.5" fill="none" stroke="#767676" stroke-width="1.2"/><rect x="539.3" y="150.1" width="10.100000000000023" height="11.400000000000006" fill="#fff" stroke="#767676" stroke-width="1.2"/><rect x="539.3" y="127.3" width="10.100000000000023" height="22.799999999999997" fill="#d4d4d4" stroke="#767676" stroke-width="1.2"/><rect x="556.5" y="144.1" width="10.100000000000023" height="17.400000000000006" fill="#fff" stroke="#767676" stroke-width="1.2"/><rect x="556.5" y="127.3" width="10.100000000000023" height="16.799999999999997" fill="#d4d4d4" stroke="#767676" stroke-width="1.2"/><path d="M424.5 203V229M420 234.5l4.5-4.5H459.5" fill="none" stroke="#767676" stroke-width="1.1"/><path d="M426.8 221l3 -3h5.2l-3 3z" fill="#fff" stroke="#767676" stroke-width="1.1" stroke-linejoin="round"/><path d="M432.0 221l3 -3v18.5l-3 3z" fill="#fff" stroke="#767676" stroke-width="1.1" stroke-linejoin="round"/><rect x="426.8" y="221" width="5.2" height="18.5" fill="#fff" stroke="#767676" stroke-width="1.1"/><path d="M432.4 212l3 -3h5.6l-3 3z" fill="#d4d4d4" stroke="#767676" stroke-width="1.1" stroke-linejoin="round"/><path d="M438.0 212l3 -3v27.5l-3 3z" fill="#d4d4d4" stroke="#767676" stroke-width="1.1" stroke-linejoin="round"/><rect x="432.4" y="212" width="5.6" height="27.5" fill="#d4d4d4" stroke="#767676" stroke-width="1.1"/><path d="M443.6 215l3 -3h5.4l-3 3z" fill="#fff" stroke="#767676" stroke-width="1.1" stroke-linejoin="round"/><path d="M449.0 215l3 -3v24.5l-3 3z" fill="#fff" stroke="#767676" stroke-width="1.1" stroke-linejoin="round"/><rect x="443.6" y="215" width="5.4" height="24.5" fill="#fff" stroke="#767676" stroke-width="1.1"/><path d="M449.8 219.4l3 -3h5.6l-3 3z" fill="#d4d4d4" stroke="#767676" stroke-width="1.1" stroke-linejoin="round"/><path d="M455.40000000000003 219.4l3 -3v20.099999999999994l-3 3z" fill="#d4d4d4" stroke="#767676" stroke-width="1.1" stroke-linejoin="round"/><rect x="449.8" y="219.4" width="5.6" height="20.099999999999994" fill="#d4d4d4" stroke="#767676" stroke-width="1.1"/><path d="M480.5 203V229M476 234.5l4.5-4.5H515.5" fill="none" stroke="#767676" stroke-width="1.1"/><path d="M485 216l3 -3h8l-3 3z" fill="#d4d4d4" stroke="#767676" stroke-width="1.1" stroke-linejoin="round"/><path d="M493 216l3 -3v23.5l-3 3z" fill="#d4d4d4" stroke="#767676" stroke-width="1.1" stroke-linejoin="round"/><rect x="485" y="216" width="8" height="23.5" fill="#d4d4d4" stroke="#767676" stroke-width="1.1"/><rect x="485" y="231" width="8" height="8.5" fill="#fff" stroke="#767676" stroke-width="1.1"/><path d="M501 208l3 -3h8l-3 3z" fill="#d4d4d4" stroke="#767676" stroke-width="1.1" stroke-linejoin="round"/><path d="M509 208l3 -3v31.5l-3 3z" fill="#d4d4d4" stroke="#767676" stroke-width="1.1" stroke-linejoin="round"/><rect x="501" y="208" width="8" height="31.5" fill="#d4d4d4" stroke="#767676" stroke-width="1.1"/><rect x="501" y="223" width="8" height="16.5" fill="#fff" stroke="#767676" stroke-width="1.1"/><path d="M536.5 203V229M532 234.5l4.5-4.5H571.5" fill="none" stroke="#767676" stroke-width="1.1"/><path d="M541 208l3 -3h8l-3 3z" fill="#d4d4d4" stroke="#767676" stroke-width="1.1" stroke-linejoin="round"/><path d="M549 208l3 -3v31.5l-3 3z" fill="#d4d4d4" stroke="#767676" stroke-width="1.1" stroke-linejoin="round"/><rect x="541" y="208" width="8" height="31.5" fill="#d4d4d4" stroke="#767676" stroke-width="1.1"/><rect x="541" y="231" width="8" height="8.5" fill="#fff" stroke="#767676" stroke-width="1.1"/><path d="M557 208l3 -3h8l-3 3z" fill="#d4d4d4" stroke="#767676" stroke-width="1.1" stroke-linejoin="round"/><path d="M565 208l3 -3v31.5l-3 3z" fill="#d4d4d4" stroke="#767676" stroke-width="1.1" stroke-linejoin="round"/><rect x="557" y="208" width="8" height="31.5" fill="#d4d4d4" stroke="#767676" stroke-width="1.1"/><rect x="557" y="223" width="8" height="16.5" fill="#fff" stroke="#767676" stroke-width="1.1"/><path d="M592.5 203V229M588 234.5l4.5-4.5H627.5" fill="none" stroke="#767676" stroke-width="1.1"/><path d="M602 208l3 -3h5l-3 3z" fill="#d4d4d4" stroke="#767676" stroke-width="1.1" stroke-linejoin="round"/><path d="M607 208l3 -3v27l-3 3z" fill="#d4d4d4" stroke="#767676" stroke-width="1.1" stroke-linejoin="round"/><rect x="602" y="208" width="5" height="27" fill="#d4d4d4" stroke="#767676" stroke-width="1.1"/><path d="M615 208l3 -3h5l-3 3z" fill="#d4d4d4" stroke="#767676" stroke-width="1.1" stroke-linejoin="round"/><path d="M620 208l3 -3v27l-3 3z" fill="#d4d4d4" stroke="#767676" stroke-width="1.1" stroke-linejoin="round"/><rect x="615" y="208" width="5" height="27" fill="#d4d4d4" stroke="#767676" stroke-width="1.1"/><path d="M592 221l3 -3h5l-3 3z" fill="#fff" stroke="#767676" stroke-width="1.1" stroke-linejoin="round"/><path d="M597 221l3 -3v18.5l-3 3z" fill="#fff" stroke="#767676" stroke-width="1.1" stroke-linejoin="round"/><rect x="592" y="221" width="5" height="18.5" fill="#fff" stroke="#767676" stroke-width="1.1"/><path d="M607 215l3 -3h5l-3 3z" fill="#fff" stroke="#767676" stroke-width="1.1" stroke-linejoin="round"/><path d="M612 215l3 -3v24.5l-3 3z" fill="#fff" stroke="#767676" stroke-width="1.1" stroke-linejoin="round"/><rect x="607" y="215" width="5" height="24.5" fill="#fff" stroke="#767676" stroke-width="1.1"/><path d="M420.5 281.4V317.3H460" fill="none" stroke="#767676" stroke-width="1.2"/><rect x="420.5" y="283.7" width="20.100000000000023" height="6.400000000000034" fill="#fff" stroke="#767676" stroke-width="1.2"/><rect x="420.5" y="290.1" width="30.100000000000023" height="7.0" fill="#d4d4d4" stroke="#767676" stroke-width="1.2"/><rect x="420.5" y="300.6" width="26.80000000000001" height="6.5" fill="#fff" stroke="#767676" stroke-width="1.2"/><rect x="420.5" y="307.1" width="20.100000000000023" height="7.0" fill="#d4d4d4" stroke="#767676" stroke-width="1.2"/><path d="M476.2 281.4V317.3H516" fill="none" stroke="#767676" stroke-width="1.2"/><rect x="476.2" y="285.4" width="11.199999999999989" height="10.0" fill="#fff" stroke="#767676" stroke-width="1.2"/><rect x="487.4" y="285.4" width="17.200000000000045" height="10.0" fill="#d4d4d4" stroke="#767676" stroke-width="1.2"/><rect x="476.2" y="302.4" width="17.5" height="10.0" fill="#fff" stroke="#767676" stroke-width="1.2"/><rect x="493.7" y="302.4" width="16.600000000000023" height="10.0" fill="#d4d4d4" stroke="#767676" stroke-width="1.2"/><path d="M532.2 281.4V317.3H571.5" fill="none" stroke="#767676" stroke-width="1.2"/><rect x="532.2" y="285.4" width="11.199999999999932" height="10.0" fill="#fff" stroke="#767676" stroke-width="1.2"/><rect x="543.4" y="285.4" width="23.0" height="10.0" fill="#d4d4d4" stroke="#767676" stroke-width="1.2"/><rect x="532.2" y="302.4" width="17.399999999999977" height="10.0" fill="#fff" stroke="#767676" stroke-width="1.2"/><rect x="549.6" y="302.4" width="16.799999999999955" height="10.0" fill="#d4d4d4" stroke="#767676" stroke-width="1.2"/><path d="M424.5 358V394.5H453M420.2 399l4.3-4.3" fill="none" stroke="#767676" stroke-width="1.2"/><path d="M421.6 369.4l2.8 -2.8H451.8l-2.8 2.8z" fill="#d4d4d4" stroke="#767676" stroke-width="1.1" stroke-linejoin="round"/><path d="M449 369.4l2.8 -2.8V372.4l-2.8 2.8z" fill="#d4d4d4" stroke="#767676" stroke-width="1.1" stroke-linejoin="round"/><rect x="421.6" y="369.4" width="27.399999999999977" height="5.800000000000011" fill="#d4d4d4" stroke="#767676" stroke-width="1.1"/><path d="M421.6 363.4l2.8 -2.8H441.8l-2.8 2.8z" fill="#fff" stroke="#767676" stroke-width="1.1" stroke-linejoin="round"/><path d="M439 363.4l2.8 -2.8V366.59999999999997l-2.8 2.8z" fill="#fff" stroke="#767676" stroke-width="1.1" stroke-linejoin="round"/><rect x="421.6" y="363.4" width="17.399999999999977" height="6.0" fill="#fff" stroke="#767676" stroke-width="1.1"/><path d="M421.6 386.5l2.8 -2.8H443.6l-2.8 2.8z" fill="#d4d4d4" stroke="#767676" stroke-width="1.1" stroke-linejoin="round"/><path d="M440.8 386.5l2.8 -2.8V389.7l-2.8 2.8z" fill="#d4d4d4" stroke="#767676" stroke-width="1.1" stroke-linejoin="round"/><rect x="421.6" y="386.5" width="19.19999999999999" height="6.0" fill="#d4d4d4" stroke="#767676" stroke-width="1.1"/><path d="M421.6 380.4l2.8 -2.8H448.6l-2.8 2.8z" fill="#fff" stroke="#767676" stroke-width="1.1" stroke-linejoin="round"/><path d="M445.8 380.4l2.8 -2.8V383.7l-2.8 2.8z" fill="#fff" stroke="#767676" stroke-width="1.1" stroke-linejoin="round"/><rect x="421.6" y="380.4" width="24.19999999999999" height="6.100000000000023" fill="#fff" stroke="#767676" stroke-width="1.1"/><path d="M412 406.5H636" stroke="#e1e1e1"/><path d="M416.5 412V426.5H432M419.5 426.5V416.5H421.5V426.5M421.5 426.5V420.5H423.5V426.5M425.5 426.5V418.5H427.5V426.5M427.5 426.5V413.5H429.5V426.5" fill="none" stroke="#767676" stroke-width="1"/></svg>
<div class="a t" style="transform:scaleX(0.740741);left:443px;top:413px;font-size:12px;line-height:12px;color:#444;--w:80;">その他の縦棒グラフ</div>
<svg class="a" style="left:452px;top:313px" width="14" height="21" viewBox="0 0 14 21"><path d="M1.4 1.2V17.4l3.8-3.6 3.1 5.8 2.3-1.1-3-5.6h5.3z" fill="#fff" stroke="#000" stroke-width="1.1" stroke-linejoin="round"/></svg>
<div class="a" style="left:453px;top:334px;width:198px;height:159px;background:#fff;border:1px solid #bfbfbf"></div>
<div class="a t" style="transform:scaleX(1);left:465px;top:342px;font-size:12px;line-height:12px;color:#333;font-weight:bold;--w:48;">集合横棒</div>
<div class="a t" style="transform:scaleX(0.891155);left:465px;top:364px;font-size:12px;line-height:12px;color:#333;--w:142;">この種類のグラフの使用目的:</div>
<div class="a t" style="transform:scaleX(0.900045);left:465px;top:378px;font-size:12px;line-height:12px;color:#333;--w:158;">• 少数の項目の値を比較します。</div>
<div class="a t" style="transform:scaleX(0.868278);left:465px;top:408px;font-size:12px;line-height:12px;color:#333;--w:55;">使用ケース:</div>
<div class="a t" style="transform:scaleX(0.869116);left:465px;top:423px;font-size:12px;line-height:12px;color:#333;--w:163;">• グラフが期間を表す場合に使いま</div>
<div class="a t" style="transform:scaleX(0.75);left:465px;top:438px;font-size:12px;line-height:12px;color:#333;--w:18;">す。</div>
<div class="a t" style="transform:scaleX(0.951313);left:465px;top:453px;font-size:12px;line-height:12px;color:#333;--w:167;">• 項目の文字列が長い場合に使い</div>
<div class="a t" style="transform:scaleX(0.805556);left:465px;top:468px;font-size:12px;line-height:12px;color:#333;--w:29;">ます。</div>
<div class="a" style="left:1px;top:681px;width:1026px;height:28px;background:#e6e6e6;"></div>
<div class="a" style="left:1px;top:681px;width:1005px;height:1px;background:#ababab;"></div>
<svg class="a" style="left:26px;top:690px" width="5" height="9" viewBox="0 0 5 9"><path d="M5 0v9L0 4.5z" fill="#c0c0c0"/></svg>
<svg class="a" style="left:56px;top:690px" width="5" height="9" viewBox="0 0 5 9"><path d="M0 0v9l5-4.5z" fill="#c0c0c0"/></svg>
<div class="a" style="left:101px;top:681px;width:47px;height:24px;background:#fff;border:1px solid #9b9b9b;border-top:none"></div>
<div class="a" style="left:101px;top:704px;width:47px;height:2px;background:#217346;"></div>
<div class="a t" style="transform:scaleX(0.938996);left:114px;top:688px;font-size:13px;line-height:13px;color:#217346;--w:19;">1月</div>
<div class="a t" style="transform:scaleX(1.04361);left:162px;top:688px;font-size:13px;line-height:13px;color:#444;--w:43;">Sheet1</div>
<div class="a" style="left:219px;top:686px;width:1px;height:19px;background:#c6c6c6;"></div>
<svg class="a" style="left:252px;top:686px" width="18" height="18" viewBox="0 0 18 18"><circle cx="9" cy="9" r="7.8" fill="none" stroke="#777" stroke-width="1.5"/><path d="M9 4.5v9M4.5 9h9" stroke="#777" stroke-width="1.8"/></svg>
<svg class="a" style="left:615px;top:690px" width="3" height="10" viewBox="0 0 3 10"><circle cx="1.5" cy="1" r="1" fill="#aaa"/><circle cx="1.5" cy="5" r="1" fill="#aaa"/><circle cx="1.5" cy="9" r="1" fill="#aaa"/></svg>
<div class="a" style="left:633px;top:688px;width:375px;height:15px;background:#dcdcdc;border:1px solid #ababab"></div>
<div class="a" style="left:633px;top:688px;width:15px;height:15px;background:#fff;border:1px solid #ababab"></div>
<svg class="a" style="left:638px;top:692px" width="4" height="7" viewBox="0 0 4 7"><path d="M4 0v7L0 3.5z" fill="#555"/></svg>
<div class="a" style="left:648px;top:688px;width:308px;height:15px;background:#fff;border:1px solid #ababab"></div>
<div class="a" style="left:993px;top:688px;width:15px;height:15px;background:#fff;border:1px solid #ababab"></div>
<svg class="a" style="left:998px;top:692px" width="4" height="7" viewBox="0 0 4 7"><path d="M0 0v7l4-3.5z" fill="#555"/></svg>
<div class="a" style="left:1px;top:709px;width:1026px;height:22px;background:#f3f3f3;"></div>
<div class="a" style="left:1px;top:709px;width:1026px;height:1px;background:#c8c8c8;"></div>
<div class="a t" style="transform:scaleX(0.979167);left:8px;top:714px;font-size:12px;line-height:12px;color:#444;--w:47;">準備完了</div>
<svg class="a" style="left:76px;top:713px" width="13" height="13" viewBox="0 0 13 13"><circle cx="3" cy="3" r="3" fill="#555"/><rect x="6.5" y="0.5" width="6" height="4" fill="#555"/><rect x="0.5" y="6.5" width="12" height="6" fill="none" stroke="#555"/><path d="M3 8.5h1M6 8.5h1M9 8.5h1M3 10.5h1M6 10.5h1M9 10.5h1" stroke="#555"/></svg>
<div class="a t" style="transform:scaleX(1.04611);left:439px;top:714px;font-size:12px;line-height:12px;color:#444;--w:67;">平均: 60770</div>
<div class="a t" style="transform:scaleX(0.923756);left:523px;top:714px;font-size:12px;line-height:12px;color:#444;--w:85;">データの個数: 19</div>
<div class="a t" style="transform:scaleX(1.0464);left:624px;top:714px;font-size:12px;line-height:12px;color:#444;--w:74;">合計: 729240</div>
<div class="a" style="left:718px;top:710px;width:38px;height:21px;background:#c6c6c6;"></div>
<svg class="a" style="left:730px;top:713px" width="14" height="13" viewBox="0 0 14 13"><rect x="0.5" y="0.5" width="13" height="12" fill="none" stroke="#555"/><path d="M0.5 4.5h13M0.5 8.5h13M4.5 0.5v12M9.5 0.5v12" stroke="#555"/></svg>
<svg class="a" style="left:768px;top:713px" width="14" height="13" viewBox="0 0 14 13"><rect x="0.5" y="0.5" width="13" height="12" fill="none" stroke="#555"/><rect x="3.5" y="3" width="7" height="7" fill="none" stroke="#555"/><path d="M5 5h4M5 7h4" stroke="#555"/></svg>
<svg class="a" style="left:806px;top:713px" width="14" height="13" viewBox="0 0 14 13"><path d="M0.5 12.5V0.5H13.5V12.5M4.5 0.5v6h5v-6" fill="none" stroke="#555"/></svg>
<div class="a" style="left:837px;top:719px;width:6px;height:2px;background:#555;"></div>
<div class="a" style="left:847px;top:719px;width:100px;height:1px;background:#999;"></div>
<div class="a" style="left:895px;top:714px;width:4px;height:11px;background:#555;"></div>
<div class="a" style="left:951px;top:719px;width:9px;height:2px;background:#555;"></div>
<div class="a" style="left:954.5px;top:715.5px;width:2px;height:9px;background:#555;"></div>
<div class="a t" style="transform:scaleX(1.07481);left:975px;top:714px;font-size:12px;line-height:12px;color:#444;--w:33;">100%</div>
<div class="a" style="left:0px;top:66px;width:1px;height:666px;background:#217346;"></div>
<div class="a" style="left:1027px;top:66px;width:1px;height:666px;background:#217346;"></div>
<div class="a" style="left:0px;top:731px;width:1028px;height:1px;background:#217346;"></div>
<script>
(function(){var els=document.querySelectorAll('.t');for(var i=0;i<els.length;i++){var e=els[i];var w=parseFloat(getComputedStyle(e).getPropertyValue('--w'));if(!w)continue;e.style.transform='none';var r=e.getBoundingClientRect().width;if(r>0){e.style.transform='scaleX('+(w/r)+')';}}})();
</script>
</body></html>
